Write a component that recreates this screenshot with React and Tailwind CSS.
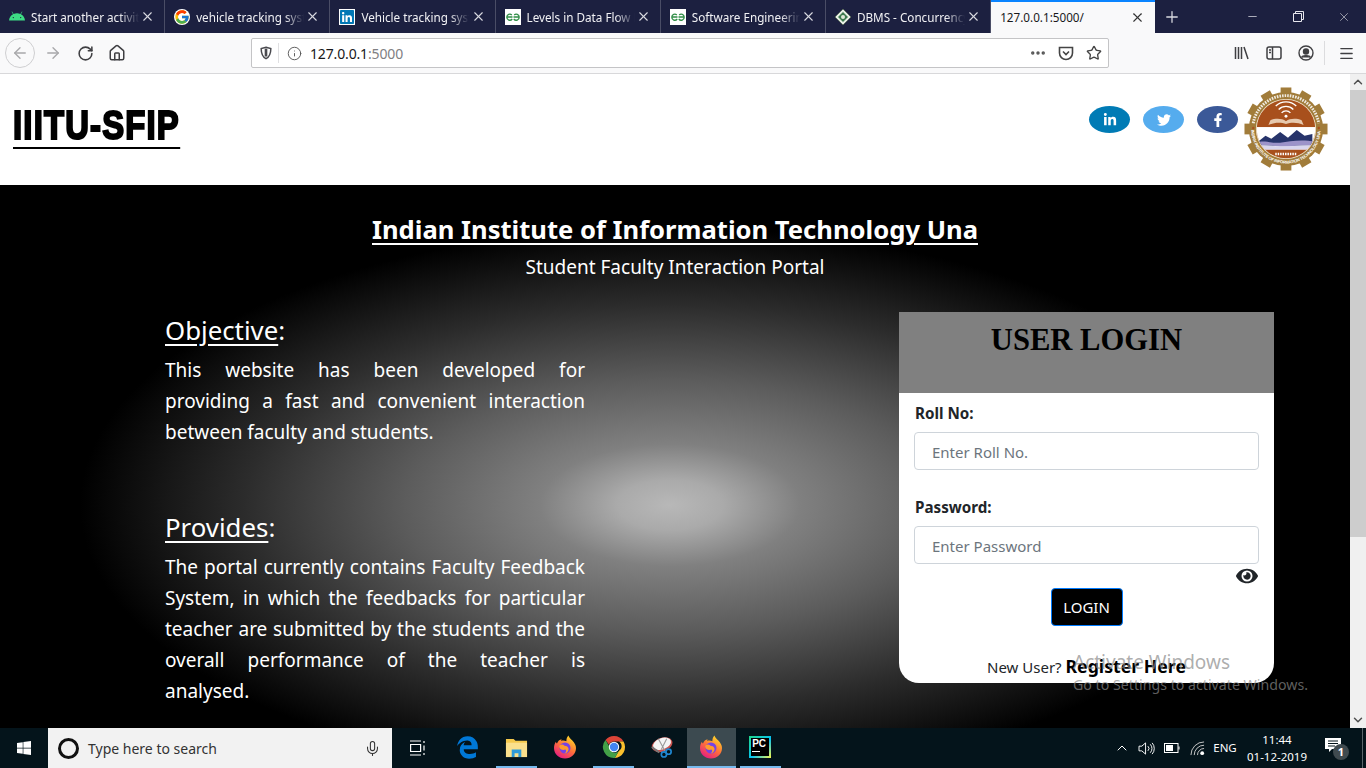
import React from 'react';
import { FaLinkedinIn, FaTwitter, FaFacebookF, FaAndroid, FaLinkedin, FaEdgeLegacy, FaEye, FaWindows } from 'react-icons/fa';
import { FcGoogle } from 'react-icons/fc';
import { X, Plus, Minus, ArrowLeft, ArrowRight, RotateCw, Home, Info, Star, Mic, ChevronUp, ChevronDown, Menu, MoreHorizontal } from 'lucide-react';

const GfgIcon = () => (
  <svg viewBox="0 0 16 16" className="w-4 h-4 bg-white shrink-0">
    <path d="M7.5 8H1.8M1.8 8a3 3 0 0 1 5-2M1.8 8a3 3 0 0 0 5.4 2" fill="none" stroke="#2f8d46" strokeWidth="1.3" />
    <path d="M8.5 8h5.7M14.2 8a3 3 0 0 0-5-2M14.2 8a3 3 0 0 1-5.4 2" fill="none" stroke="#2f8d46" strokeWidth="1.3" />
  </svg>
);

const TpIcon = () => (
  <svg viewBox="0 0 16 16" className="w-4 h-4 shrink-0">
    <path d="M8 0l8 8-8 8-8-8z" fill="#e8efe6" stroke="#5b6b5f" strokeWidth="1" />
    <path d="M8 3l5 5-5 5-5-5z" fill="#3c7a4e" />
    <circle cx="8" cy="8" r="2" fill="#dfe8d8" />
  </svg>
);

const tabs = [
  { title: 'Start another activity', icon: <FaAndroid className="w-4 h-4 text-[#3ddc84] shrink-0" /> },
  { title: 'vehicle tracking system', icon: <FcGoogle className="w-4 h-4 shrink-0 bg-white rounded-full" /> },
  { title: 'Vehicle tracking system', icon: <FaLinkedin className="w-4 h-4 text-[#0077b5] bg-white shrink-0" /> },
  { title: 'Levels in Data Flow Diagrams', icon: <GfgIcon /> },
  { title: 'Software Engineering', icon: <GfgIcon /> },
  { title: 'DBMS - Concurrency', icon: <TpIcon /> },
];

const objectiveLines = [
  'This website has been developed for',
  'providing a fast and convenient interaction',
];

const providesLines = [
  'The portal currently contains Faculty Feedback',
  'System, in which the feedbacks for particular',
  'teacher are submitted by the students and the',
  'overall performance of the teacher is',
];

const Firefox = () => (
  <svg viewBox="0 0 24 24" className="w-6 h-6">
    <defs>
      <linearGradient id="ffa" x1="0.8" y1="0" x2="0.2" y2="1">
        <stop offset="0" stopColor="#ffe226" />
        <stop offset="0.5" stopColor="#ff7139" />
        <stop offset="1" stopColor="#e31587" />
      </linearGradient>
    </defs>
    <path d="M15.5 0.5c.6 2.2 2 3.200 3.600 4.800 2.600 2.600 3.900 5.200 3.900 7.700 0 6-4.900 10.500-11 10.500S1 19 1 13c0-2.600.8-4.700 1.900-6.300.2.900.6 1.500 1.100 1.900C4.800 6.300 6.500 4.500 8.800 4.300c-.5.500-.8 1-.9 1.500 1.700-.7 3.900-.5 5.500.4 0-2.200.5-4.200 2.100-5.700z" fill="url(#ffa)" />
    <circle cx="12" cy="13" r="5.500" fill="#7542e5" />
    <path d="M6.500 10.500c2-1.500 3.800-1 5 .2 1.500 0 3.500.6 4 2.800.4 2.400-1.500 4.800-4 4.800 2-1 2.200-3 .8-3.800-2 1-4.800.3-5.800-1.800-.4-.7-.4-1.500 0-2.200z" fill="#ff9a2e" />
  </svg>
);

const Chrome = () => (
  <svg viewBox="0 0 24 24" className="w-6 h-6">
    <path d="M12 1a11 11 0 0 1 9.530 5.500H12a5.500 5.500 0 0 0-5 3.200L3.500 5A11 11 0 0 1 12 1z" fill="#db4437" />
    <path d="M21.530 6.500A11 11 0 0 1 12.800 23l4-7a5.500 5.500 0 0 0 .2-9.500z" fill="#fbc02d" />
    <path d="M12.800 23A11 11 0 0 1 3.500 5l4.500 7.800a5 5 0 0 0 8.800 3.200z" fill="#43a047" />
    <circle cx="12" cy="12" r="5.200" fill="#fff" />
    <circle cx="12" cy="12" r="4.200" fill="#4285f4" />
  </svg>
);

const Folder = () => (
  <svg viewBox="0 0 24 24" className="w-[23px] h-[23px]">
    <path d="M1 3h8l2 2h12v17H1z" fill="#f5c94c" />
    <path d="M1 7h22v15H1z" fill="#fbe08c" />
    <path d="M7 22v-8h10v8h-3v-4h-4v4z" fill="#2f9bd8" />
  </svg>
);

const Snip = () => (
  <svg viewBox="0 0 28 24" className="w-[26px] h-[24px]">
    <ellipse cx="13" cy="9.500" rx="11.500" ry="7.500" transform="rotate(-20 13 9.500)" fill="#c9534f" />
    <ellipse cx="13" cy="8.500" rx="10" ry="6" transform="rotate(-20 13 8.500)" fill="#f4f4f4" />
    <path d="M9 3l7 13M18 3l-6 12" stroke="#9a9a9a" strokeWidth="1.200" fill="none" />
    <circle cx="20" cy="17" r="2.800" fill="none" stroke="#1f86d0" strokeWidth="1.800" />
    <circle cx="15" cy="20" r="2.800" fill="none" stroke="#1f86d0" strokeWidth="1.800" />
    <path d="M2 12l8 6" stroke="#777" strokeWidth="2" />
  </svg>
);

const PyCharm = () => (
  <div className="w-[22px] h-[22px] bg-[linear-gradient(135deg,#21d789,#07c3f2_55%,#fcf84a)] p-[2px]">
    <div className="w-full h-full bg-black flex flex-col pl-[1px] leading-none font-['Liberation_Sans',sans-serif] font-bold text-white text-[10px]">
      <span className="mt-[1px]">PC</span>
      <span className="w-[8px] h-[1px] bg-white mt-[2px]" />
    </div>
  </div>
);

const Logo = () => (
  <svg viewBox="0 0 86 86" className="w-[84px] h-[84px] shrink-0">
    <defs>
      <path id="lowerRing" d="M7.500 43a35.500 35.500 0 0 0 71 0" />
      <clipPath id="disk"><circle cx="43" cy="43" r="30" /></clipPath>
    </defs>
    <g fill="#a17c3a">
      <circle cx="43" cy="43" r="38" />
      {[0, 30, 60, 90, 120, 150, 180, 210, 240, 270, 300, 330].map((deg) => (
        <rect key={deg} x="37.500" y="0.500" width="11" height="8" transform={`rotate(${deg} 43 43)`} />
      ))}
    </g>
    <circle cx="43" cy="43" r="30.800" fill="#f4ead6" />
    <g clipPath="url(#disk)">
      <rect x="10" y="10" width="66" height="66" fill="#a8501c" />
      <rect x="10" y="41" width="66" height="23" fill="#fff" />
      <path d="M13 57l9-7 6 3 9-7 8 6 9-8 8 6 8-2v12H13z" fill="#27346b" />
      <path d="M13 57c8-3 14 1 24 0s20-4 36-1v4c-12-2-22 1-32 1s-14-3-28-1z" fill="#9c93c9" />
      <path d="M13 60c10-1 16 1 26 1s22-2 34-1v4H13z" fill="#d9d6ee" />
      <g fill="none" stroke="#fff" strokeWidth="1.400">
        <path d="M32.500 19.500a15 15 0 0 1 21 0" />
        <path d="M35.500 23a10.500 10.500 0 0 1 15 0" />
        <path d="M38.500 26.500a6 6 0 0 1 9 0" />
      </g>
      <circle cx="43" cy="30" r="1.500" fill="#fff" />
      <path d="M25 39c6-3 13-3 18-1 5-2 12-2 18 1l-2-5c-5-2-12-2-16 1-4-3-11-3-16-1z" fill="#e6c9ae" />
      <path d="M32 68.500h22" stroke="#fff" strokeWidth="2.500" strokeDasharray="1.500 1" />
    </g>
    <path d="M9.500 37a34 34 0 0 1 67 0" fill="none" stroke="#fff" strokeWidth="3" strokeDasharray="1.600 1.100" opacity="0.85" />
    <text fontSize="4.300" fontWeight="700" fill="#fff" fontFamily="Liberation Sans, sans-serif" textLength="108">
      <textPath href="#lowerRing" startOffset="1">INDIAN INSTITUTE OF INFORMATION TECHNOLOGY UNA</textPath>
    </text>
    <circle cx="9.500" cy="42" r="1.200" fill="#a8501c" />
    <circle cx="76.500" cy="42" r="1.200" fill="#a8501c" />
  </svg>
);

function Tab({ title, icon }) {
  return (
    <div className="w-[165.200px] h-full border-r border-[#4a4d66] flex items-center pl-[9px] pr-[9px] shrink-0">
      {icon}
      <span className="ml-[6px] mt-[2px] w-[108px] overflow-hidden whitespace-nowrap text-[11.700px] text-[#f1f1f4] [mask-image:linear-gradient(to_right,#000_82%,transparent)]">
        {title}
      </span>
      <X className="ml-auto w-[15px] h-[15px] text-[#d8d9e0]" strokeWidth={1.800} />
    </div>
  );
}

function BrowserChrome() {
  return (
    <>
      <div className="h-[33px] bg-[#1c2040] flex items-stretch shrink-0">
        {tabs.map((t) => <Tab key={t.title} {...t} />)}
        <div className="w-[164px] bg-[#f9f9fa] border-t-2 border-[#0a84ff] flex items-center pl-[9px] pr-[10px] text-[11.700px] text-[#18181a]">
          <span className="mt-[1px]">127.0.0.1:5000/</span>
          <X className="ml-auto w-[15px] h-[15px] text-[#333]" strokeWidth={1.800} />
        </div>
        <div className="w-[34px] flex items-center justify-center">
          <Plus className="w-[18px] h-[18px] text-[#d8d9e0]" strokeWidth={1.700} />
        </div>
        <div className="ml-auto flex items-center text-[#e8e8ee]">
          <div className="w-[45px] flex justify-center"><Minus className="w-[13px] h-[13px]" strokeWidth={1.300} /></div>
          <div className="w-[46px] flex justify-center">
            <svg viewBox="0 0 11 11" className="w-[11px] h-[11px]" fill="none" stroke="currentColor"><path d="M.5 2.500h8v8h-8zM2.500 2.500v-2h8v8h-2" /></svg>
          </div>
          <div className="w-[45px] flex justify-center"><X className="w-[14px] h-[14px]" strokeWidth={1} /></div>
        </div>
      </div>
      <div className="h-[41px] bg-[#f9f9fa] border-b border-[#d8d8da] flex items-center shrink-0 text-[#3f3f42]">
        <div className="ml-[5px] w-[30px] h-[30px] rounded-full border border-[#cfcfd1] flex items-center justify-center text-[#a8a8aa]">
          <ArrowLeft className="w-[18px] h-[18px]" strokeWidth={1.800} />
        </div>
        <ArrowRight className="ml-[9px] w-[18px] h-[18px] text-[#a8a8aa]" strokeWidth={1.800} />
        <RotateCw className="ml-[15px] w-[17px] h-[17px]" strokeWidth={2.200} />
        <Home className="ml-[14px] w-[18px] h-[18px]" strokeWidth={2} />
        <div className="ml-[125px] w-[858px] h-[30px] bg-white border border-[#c4c4c6] rounded-[2px] flex items-center pr-[6px]">
          <svg viewBox="0 0 16 16" className="ml-[7px] w-[14px] h-[14px]" fill="none" stroke="#4a4a4f" strokeWidth="1.700"><path d="M8 1.500l5.500 1.500c0 5-1 9-5.500 11.500C3.500 12 2.500 8 2.500 3z" /><path d="M8 3v9" strokeWidth="3" /></svg>
          <span className="ml-[5px] w-px h-[20px] bg-[#e0e0e2]" />
          <Info className="ml-[8px] w-[15px] h-[15px] text-[#555]" strokeWidth={1.500} />
          <span className="ml-[8px] text-[14px] tracking-[-0.150px] text-[#18181a]">127.0.0.1<span className="text-[#808083]">:5000</span></span>
          <MoreHorizontal className="ml-auto w-[18px] h-[18px] text-[#555]" strokeWidth={2.600} />
          <svg viewBox="0 0 16 16" className="ml-[11px] w-[16px] h-[16px]" fill="none" stroke="#444" strokeWidth="1.600"><path d="M1.500 2.500h13v5.500a6.500 6.500 0 0 1-13 0z" /><path d="M5 6.500l3 3 3-3" /></svg>
          <Star className="ml-[12px] w-[16px] h-[16px] text-[#444]" strokeWidth={2} />
        </div>
        <svg viewBox="0 0 16 16" className="ml-[125px] w-[16px] h-[16px]" fill="none" stroke="#3f3f42" strokeWidth="1.500"><path d="M1.500 2v12M4.500 2v12M7.500 2v12M10 2l4 12" /></svg>
        <svg viewBox="0 0 16 16" className="ml-[16px] w-[16px] h-[16px]" fill="none" stroke="#3f3f42" strokeWidth="1.500"><rect x="1" y="2" width="14" height="12" rx="2" /><path d="M6.500 2v12M3 5h2M3 7.500h2" /></svg>
        <svg viewBox="0 0 16 16" className="ml-[16px] w-[16px] h-[16px]" fill="none" stroke="#3f3f42" strokeWidth="1.400"><circle cx="8" cy="8" r="7" /><circle cx="8" cy="6.500" r="2.500" fill="#3f3f42" /><path d="M3.500 12.500c1-2.500 8-2.500 9 0" fill="#3f3f42" /></svg>
        <span className="ml-[10px] w-px h-[24px] bg-[#dcdcde]" />
        <Menu className="ml-[13px] w-[17px] h-[17px]" strokeWidth={1.800} />
      </div>
    </>
  );
}

function Header() {
  const socials = [
    { Icon: FaLinkedinIn, bg: 'bg-[#007bb5]' },
    { Icon: FaTwitter, bg: 'bg-[#55acee]' },
    { Icon: FaFacebookF, bg: 'bg-[#3b5998]' },
  ];
  return (
    <div className="h-[111px] bg-white flex items-center shrink-0 pl-[13px] pr-[22px]">
      <h1 className="origin-left scale-x-[0.8] mb-[8px] border-b-2 border-black text-[41px] leading-[44px] tracking-[1.500px] font-bold text-black font-['Liberation_Sans',sans-serif] [-webkit-text-stroke:2.200px_#000] whitespace-nowrap">
        IIITU-SFIP
      </h1>
      <div className="ml-auto mb-[20px] flex items-center gap-[13px]">
        {socials.map(({ Icon, bg }, i) => (
          <div key={i} className={`w-[41px] h-[27px] rounded-[50%] flex items-center justify-center text-white text-[14px] ${bg}`}>
            <Icon />
          </div>
        ))}
      </div>
      <div className="ml-[6px] mb-[2px]"><Logo /></div>
    </div>
  );
}

function LoginCard() {
  return (
    <div className="w-[375px] h-[371px] mt-[2px] bg-white rounded-b-[20px] overflow-hidden text-[#212529]">
      <div className="h-[81px] bg-[#808080] pt-[9px] text-center">
        <h2 className="text-[30.600px] leading-[38px] font-bold text-black font-['Liberation_Serif',serif]">USER LOGIN</h2>
      </div>
      <div className="px-[15px] pt-[10px]">
        <label className="block pl-px text-[15.200px] leading-[20px] font-bold">Roll No:</label>
        <input readOnly placeholder="Enter Roll No." className="mt-[9px] block w-[345px] h-[38px] px-[17px] pt-[2px] border border-[#ced4da] rounded-[4px] text-[15px] placeholder:text-[#6c757d]" />
        <label className="block pl-px mt-[27px] text-[15.200px] leading-[20px] font-bold">Password:</label>
        <input readOnly placeholder="Enter Password" className="mt-[9px] block w-[345px] h-[38px] px-[17px] pt-[2px] border border-[#ced4da] rounded-[4px] text-[15px] placeholder:text-[#6c757d]" />
        <div className="flex justify-end"><FaEye className="mt-[2px] w-[22px] h-[20px] mr-px text-[#212529]" /></div>
        <div className="flex justify-center">
          <button className="w-[72px] h-[38px] mt-[2px] bg-black border border-[#007bff] rounded-[4px] text-white text-[15px]">LOGIN</button>
        </div>
        <p className="mt-[28px] text-center text-[15px] leading-[24px]">
          New User? <b className="text-[17.700px] text-black">Register Here</b>
        </p>
      </div>
    </div>
  );
}

function JustifiedLines({ lines, last }) {
  return (
    <p className="mt-[6px]">
      {lines.map((line) => (
        <span key={line} className="block [text-align-last:justify]">{line}</span>
      ))}
      <span className="block">{last}</span>
    </p>
  );
}

function MainArea() {
  return (
    <div className="relative h-[543px] bg-black bg-[radial-gradient(ellipse_590px_278px_at_670px_320px,#b8b8b8_0%,#aaaaaa_9%,#808080_22%,#5c5c5c_45%,#2c2c2c_72%,#000_100%)] text-white overflow-hidden">
      <div className="text-center pt-[26px]">
        <h2 className="text-[25.600px] leading-[38px] font-bold underline underline-offset-[4px] decoration-2">Indian Institute of Information Technology Una</h2>
        <p className="text-[19px] leading-[28px] mt-[4px]">Student Faculty Interaction Portal</p>
      </div>
      <div className="flex items-start pl-[165px] pr-[76px] mt-[29px]">
        <div className="w-[420px] text-[19px] leading-[30.800px]">
          <h3 className="text-[25.800px] leading-[38px] mt-[1px]"><span className="underline underline-offset-[4px]">Objective</span>:</h3>
          <JustifiedLines lines={objectiveLines} last="between faculty and students." />
          <h3 className="text-[25.800px] leading-[38px] mt-[61px]"><span className="underline underline-offset-[4px]">Provides</span>:</h3>
          <JustifiedLines lines={providesLines} last="analysed." />
        </div>
        <div className="ml-auto"><LoginCard /></div>
      </div>
      <div className="absolute left-[1073px] top-[464px] text-[#8a8a8a]/70 pointer-events-none">
        <div className="text-[19px] leading-[26px]">Activate Windows</div>
        <div className="text-[14.200px] leading-[20px]">Go to Settings to activate Windows.</div>
      </div>
    </div>
  );
}

function Scrollbar() {
  return (
    <div className="w-[16px] bg-[#f0f0f0] flex flex-col items-center shrink-0">
      <ChevronUp className="w-[14px] h-[16px] text-[#505050]" strokeWidth={2.500} />
      <div className="w-full h-[447px] bg-[#cdcdcd]" />
      <ChevronDown className="mt-auto w-[14px] h-[16px] text-[#505050]" strokeWidth={2.500} />
    </div>
  );
}

function Taskbar() {
  const apps = [
    { el: <FaEdgeLegacy className="w-[23px] h-[23px] text-[#0078d7]" /> },
    { el: <Folder />, open: true },
    { el: <Firefox /> },
    { el: <Chrome />, open: true },
    { el: <Snip /> },
    { el: <Firefox />, active: true },
    { el: <PyCharm />, open: true },
  ];
  return (
    <div className="h-[40px] bg-[#04141b] flex items-stretch shrink-0 text-white">
      <div className="w-[48px] flex items-center justify-center"><FaWindows className="w-[16px] h-[16px]" /></div>
      <div className="w-[344px] bg-[#f2f2f2] flex items-center text-[#333] text-[14px]">
        <span className="ml-[10px] w-[21px] h-[21px] rounded-full border-[3px] border-[#111]" />
        <span className="ml-[9px]">Type here to search</span>
        <Mic className="ml-auto mr-[11px] w-[17px] h-[17px]" strokeWidth={1.500} />
      </div>
      <div className="w-[51px] flex items-center justify-center">
        <svg viewBox="0 0 16 16" className="w-[16px] h-[16px]" fill="none" stroke="#fff" strokeWidth="1.200"><path d="M0 1h11M0 15h11M.6 4.500h10v7H.6zM14 1v2M14 5.500v5M14 13v2" /></svg>
      </div>
      {apps.map((a, i) => (
        <div key={i} className={`w-[48.800px] ${a.active ? 'bg-[#3c4a50]' : 'px-[4px]'}`}>
          <div className={`h-full flex items-center justify-center border-b-2 ${a.active || a.open ? 'border-[#76b9ed]' : 'border-transparent'}`}>
            {a.el}
          </div>
        </div>
      ))}
      <div className="ml-auto flex items-center text-[11.500px] whitespace-nowrap">
        <ChevronUp className="w-[16px] h-[16px]" strokeWidth={1.500} />
        <svg viewBox="0 0 18 16" className="ml-[8px] w-[17px] h-[15px]" fill="none" stroke="#fff" strokeWidth="1"><path d="M1 5.500h3L8 2v12l-4-3.500H1zM10.500 5.500a3.500 3.500 0 0 1 0 5M13 3.500a6.500 6.500 0 0 1 0 9M15 2a9 9 0 0 1 0 12" /></svg>
        <svg viewBox="0 0 16 10" className="ml-[9px] w-[16px] h-[10px]" fill="none" stroke="#fff" strokeWidth="1"><rect x=".5" y=".5" width="13.500" height="9" /><rect x="2" y="2" width="7" height="6" fill="#fff" stroke="none" /><path d="M15 3.500v3" /></svg>
        <svg viewBox="0 0 16 16" className="ml-[10px] w-[15px] h-[15px]" fill="none" stroke="#cfcfcf" strokeWidth="1"><path d="M1 15a14 14 0 0 1 14-14M4.500 15a10.500 10.500 0 0 1 10.500-10.500M8 15a7 7 0 0 1 7-7" /><circle cx="13" cy="13" r="2" fill="#fff" stroke="none" /></svg>
        <span className="ml-[7px] w-[26px] text-center">ENG</span>
        <div className="ml-[4px] w-[70px] text-center leading-[17px]">
          <div>11:44</div>
          <div>01-12-2019</div>
        </div>
        <div className="relative ml-[13px] w-[22px] h-[22px]">
          <svg viewBox="0 0 16 16" className="w-[16px] h-[16px]" fill="#fff"><path d="M0 1h16v11H7l-3 3v-3H0z" /><path d="M3 4h10M3 6.500h10M3 9h7" stroke="#04141b" /></svg>
          <span className="absolute left-[8px] top-[7px] w-[16px] h-[16px] rounded-full bg-[#3f4a4f] text-center text-[11px] leading-[16px] font-bold">1</span>
        </div>
        <span className="ml-[15px] mr-[3px] w-px h-full bg-[#5a666b]" />
      </div>
    </div>
  );
}

export default function App() {
  return (
    <div className="w-[1366px] h-screen flex flex-col overflow-hidden font-['Noto_Sans',sans-serif]">
      <BrowserChrome />
      <div className="flex flex-1 min-h-0">
        <div className="flex-1 min-w-0">
          <Header />
          <MainArea />
        </div>
        <Scrollbar />
      </div>
      <Taskbar />
    </div>
  );
}
